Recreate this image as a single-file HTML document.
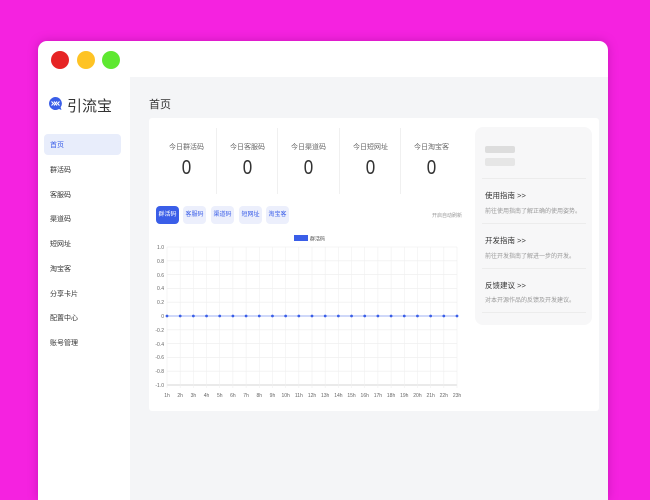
<!DOCTYPE html>
<html><head><meta charset="utf-8"><style>
*{margin:0;padding:0;box-sizing:border-box}
body{width:650px;height:500px;background:#f522e0;position:relative;overflow:hidden;font-family:"Liberation Sans","Noto Sans CJK SC",sans-serif}
.win{position:absolute;left:38px;top:41px;width:570px;height:459px;background:#fff;border-radius:9px 9px 0 0;box-shadow:0 0 10px rgba(120,0,110,.35)}
.dot{position:absolute;top:51px;width:18px;height:18px;border-radius:50%}
.side{position:absolute;left:38px;top:77px;width:92px;height:423px;background:#fff}
.main{position:absolute;left:130px;top:77px;width:478px;height:423px;background:#f4f5f7}
.nav{position:absolute;left:50px;font-size:7px;color:#333}
.t{position:absolute;white-space:nowrap}
.card{position:absolute;left:149px;top:118px;width:450px;height:293px;background:#fff;border-radius:3px}
.sl{font-size:7px;color:#666;text-align:center;width:61px}
.sn{font-size:20px;color:#333;text-align:center;width:61px;transform:scaleX(.85)}
.tab{position:absolute;top:206px;height:18px;width:23px;border-radius:4px;background:#eceffc;color:#3a5ee8;font-size:6px;text-align:center;line-height:18px}
.rp{position:absolute;left:475px;top:127px;width:117px;height:198px;background:#f7f7f8;border-radius:8px}
</style></head><body>
<div class="win"></div>
<div class="dot" style="left:51px;background:#e62424"></div>
<div class="dot" style="left:77px;background:#fec324"></div>
<div class="dot" style="left:102px;background:#5ee830"></div>
<div class="side"></div>
<div class="main"></div>
<svg style="position:absolute;left:48px;top:96px" width="15" height="15" viewBox="0 0 15 15"><path d="M7.5 1A6.5 6.5 0 1 0 11 13L13.5 14 12.6 11.3A6.5 6.5 0 0 0 7.5 1Z" fill="#3a5ee8"/><path d="M3.5 5.5l2 2-2 2M6 5.5l1.5 2L9 5.5M6 9.5l1.5-2L9 9.5M11.5 5.5l-2 2 2 2" stroke="#fff" stroke-width="1.1" fill="none"/></svg>
<div class="t" style="left:67px;top:95px;font-size:15px;color:#333">引流宝</div>
<div style="position:absolute;left:44px;top:134px;width:77px;height:21px;background:#e8edfb;border-radius:4px"></div>
<div class="nav t" style="top:140px;color:#3a5ee8">首页</div>
<div class="nav t" style="top:165px">群活码</div>
<div class="nav t" style="top:190px">客服码</div>
<div class="nav t" style="top:214px">渠道码</div>
<div class="nav t" style="top:239px">短网址</div>
<div class="nav t" style="top:264px">淘宝客</div>
<div class="nav t" style="top:289px">分享卡片</div>
<div class="nav t" style="top:313px">配置中心</div>
<div class="nav t" style="top:338px">账号管理</div>
<div class="t" style="left:149px;top:96px;font-size:11px;color:#333">首页</div>
<div class="card"></div>
<div style="position:absolute;left:216px;top:128px;width:1px;height:66px;background:#f0f0f0"></div>
<div style="position:absolute;left:277px;top:128px;width:1px;height:66px;background:#f0f0f0"></div>
<div style="position:absolute;left:339px;top:128px;width:1px;height:66px;background:#f0f0f0"></div>
<div style="position:absolute;left:400px;top:128px;width:1px;height:66px;background:#f0f0f0"></div>
<div class="t sl" style="left:156px;top:142px">今日群活码</div><div class="t sn" style="left:156px;top:157px">0</div>
<div class="t sl" style="left:217px;top:142px">今日客服码</div><div class="t sn" style="left:217px;top:157px">0</div>
<div class="t sl" style="left:278px;top:142px">今日渠道码</div><div class="t sn" style="left:278px;top:157px">0</div>
<div class="t sl" style="left:340px;top:142px">今日短网址</div><div class="t sn" style="left:340px;top:157px">0</div>
<div class="t sl" style="left:401px;top:142px">今日淘宝客</div><div class="t sn" style="left:401px;top:157px">0</div>
<div class="tab" style="left:156px;background:#3a5ee8;color:#fff">群活码</div>
<div class="tab" style="left:183px">客服码</div>
<div class="tab" style="left:211px">渠道码</div>
<div class="tab" style="left:239px">短网址</div>
<div class="tab" style="left:266px">淘宝客</div>
<div class="t" style="left:432px;top:212px;font-size:5px;color:#999">开启自动刷新</div>
<svg style="position:absolute;left:0;top:0" width="650" height="500" font-family="Liberation Sans" font-size="5" fill="#666">
<rect x="294" y="235" width="14" height="6" fill="#3a5ee8"/><text x="310" y="240.5" fill="#555">群活码</text>
<g stroke="#ececec" stroke-width="0.6">
<line x1="167" y1="247" x2="457" y2="247"/><line x1="167" y1="260.8" x2="457" y2="260.8"/><line x1="167" y1="274.6" x2="457" y2="274.6"/><line x1="167" y1="288.4" x2="457" y2="288.4"/><line x1="167" y1="302.2" x2="457" y2="302.2"/><line x1="167" y1="316" x2="457" y2="316"/><line x1="167" y1="329.8" x2="457" y2="329.8"/><line x1="167" y1="343.6" x2="457" y2="343.6"/><line x1="167" y1="357.4" x2="457" y2="357.4"/><line x1="167" y1="371.2" x2="457" y2="371.2"/><line x1="167" y1="385" x2="457" y2="385" stroke="#ddd" stroke-width="1.2"/>
</g>
<g id="v" stroke="#efefef" stroke-width="0.6"></g>
<g text-anchor="end"><text x="164" y="249">1.0</text><text x="164" y="263">0.8</text><text x="164" y="277">0.6</text><text x="164" y="290">0.4</text><text x="164" y="304">0.2</text><text x="164" y="318">0</text><text x="164" y="332">-0.2</text><text x="164" y="346">-0.4</text><text x="164" y="359">-0.6</text><text x="164" y="373">-0.8</text><text x="164" y="387">-1.0</text></g>
<line x1="167" y1="316" x2="457" y2="316" stroke="#9fb2f3" stroke-width="1"/>
<g id="pts" fill="#3a5ee8"></g>
<g id="xl" text-anchor="middle"></g>
</svg>
<div class="rp"></div>
<div style="position:absolute;left:485px;top:146px;width:30px;height:7px;background:#ddd;border-radius:2px"></div>
<div style="position:absolute;left:485px;top:158px;width:30px;height:8px;background:#e6e6e6;border-radius:2px"></div>
<div style="position:absolute;left:482px;top:178px;width:104px;height:1px;background:#ececec"></div>
<div class="t" style="left:485px;top:190px;font-size:7.5px;color:#333">使用指南 &gt;&gt;</div>
<div class="t" style="left:485px;top:206px;font-size:6px;color:#999">前往使用指南了解正确的使用姿势。</div>
<div style="position:absolute;left:482px;top:223px;width:104px;height:1px;background:#ececec"></div>
<div class="t" style="left:485px;top:235px;font-size:7.5px;color:#333">开发指南 &gt;&gt;</div>
<div class="t" style="left:485px;top:251px;font-size:6px;color:#999">前往开发指南了解进一步的开发。</div>
<div style="position:absolute;left:482px;top:268px;width:104px;height:1px;background:#ececec"></div>
<div class="t" style="left:485px;top:280px;font-size:7.5px;color:#333">反馈建议 &gt;&gt;</div>
<div class="t" style="left:485px;top:295px;font-size:6px;color:#999">对本开源作品的反馈及开发建议。</div>
<div style="position:absolute;left:482px;top:312px;width:104px;height:1px;background:#ececec"></div>
<script>
var ns="http://www.w3.org/2000/svg",v=document.getElementById('v'),p=document.getElementById('pts'),xl=document.getElementById('xl');
for(var j=0;j<23;j++){var x=167+j*290/22;
var l=document.createElementNS(ns,'line');l.setAttribute('x1',x);l.setAttribute('x2',x);l.setAttribute('y1',247);l.setAttribute('y2',388);v.appendChild(l);
var c=document.createElementNS(ns,'circle');c.setAttribute('cx',x);c.setAttribute('cy',316);c.setAttribute('r',1.4);p.appendChild(c);
var t=document.createElementNS(ns,'text');t.setAttribute('x',x);t.setAttribute('y',397);t.textContent=(j+1)+'h';xl.appendChild(t);}
</script>
</body></html>
